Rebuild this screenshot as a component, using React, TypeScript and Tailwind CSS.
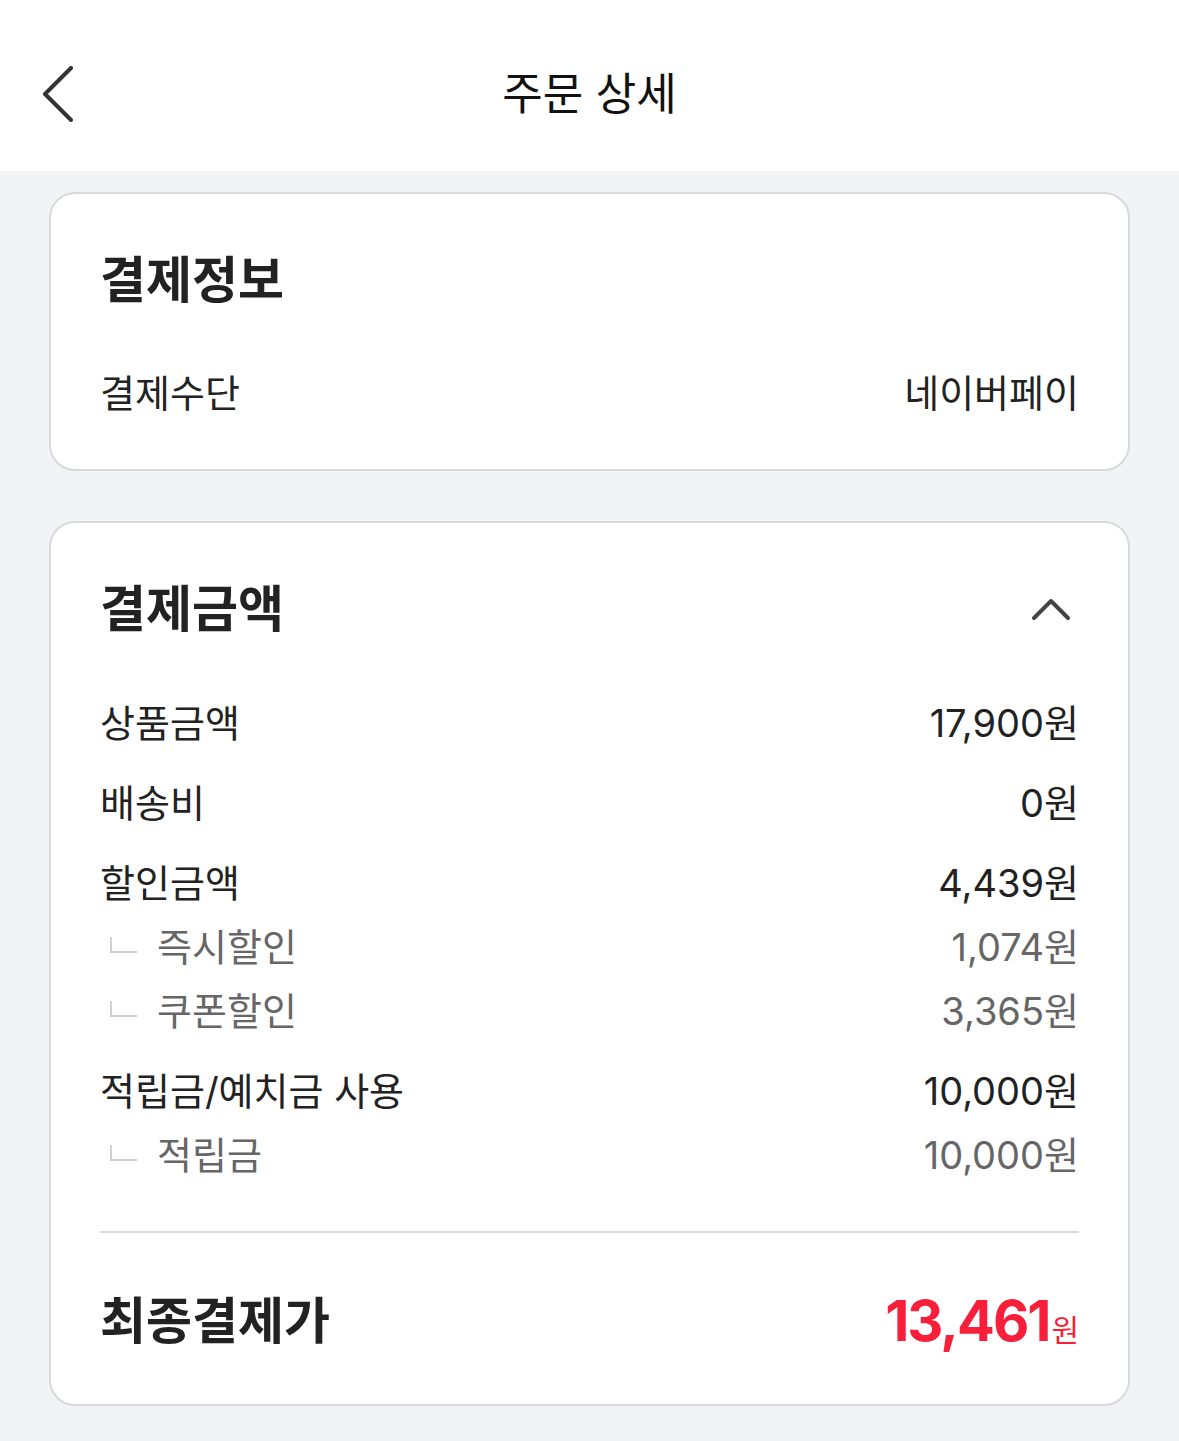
import React from "react";

const font = { fontFamily: 'Inter, "Noto Sans CJK KR", "Noto Sans", sans-serif' };

interface Row {
  label: string;
  value: string;
  sub?: boolean;
}

const groups: Row[][] = [
  [{ label: "상품금액", value: "17,900원" }],
  [{ label: "배송비", value: "0원" }],
  [
    { label: "할인금액", value: "4,439원" },
    { label: "즉시할인", value: "1,074원", sub: true },
    { label: "쿠폰할인", value: "3,365원", sub: true },
  ],
  [
    { label: "적립금/예치금 사용", value: "10,000원" },
    { label: "적립금", value: "10,000원", sub: true },
  ],
];

const PriceRow: React.FC<{ row: Row }> = ({ row }) => (
  <div className="flex items-center justify-between h-[64px]">
    {row.sub ? (
      <div className="flex items-center">
        <div className="w-[27px] h-[16px] ml-[10px] mr-[20px] border-l-2 border-b-2 border-[#d0d0d0] -mt-[4px]" />
        <span className="text-[38px] text-[#666666]">{row.label}</span>
      </div>
    ) : (
      <span className="text-[38px] text-[#222222]">{row.label}</span>
    )}
    <span className={`text-[38px] ${row.sub ? "text-[#666666]" : "text-[#222222]"}`}>{row.value}</span>
  </div>
);

const App: React.FC = () => {
  return (
    <div className="min-h-[1441px] bg-[#f2f3f5]" style={font}>
      {/* header */}
      <div className="relative h-[171px] bg-white flex items-center justify-center">
        <button className="absolute left-[40px] top-[66px]">
          <svg width="36" height="56" viewBox="0 0 36 56" fill="none">
            <path d="M31 2 L5 28 L31 54" stroke="#333333" strokeWidth="4" strokeLinecap="round" strokeLinejoin="round" />
          </svg>
        </button>
        <h1 className="text-[44px] text-[#111111] leading-[56px] mt-[16px]">주문 상세</h1>
      </div>

      <div className="px-[49px] pt-[21px] pb-[34px] flex flex-col gap-[50px]">
        {/* 결제정보 */}
        <div className="bg-white border-2 border-[#d9d9dd] rounded-[26px] px-[49px] pt-[58px] pb-[52px]">
          <h2 className="text-[50px] font-bold text-[#222222] leading-[56px]">결제정보</h2>
          <div className="flex items-center justify-between mt-[61px] h-[48px]">
            <span className="text-[38px] text-[#222222]">결제수단</span>
            <span className="text-[38px] text-[#222222]">네이버페이</span>
          </div>
        </div>

        {/* 결제금액 */}
        <div className="bg-white border-2 border-[#d9d9dd] rounded-[26px] px-[49px] pt-[58px] pb-[51px]">
          <div className="flex items-center justify-between h-[56px]">
            <h2 className="text-[50px] font-bold text-[#222222]">결제금액</h2>
            <svg width="40" height="26" viewBox="0 0 40 26" fill="none" className="mr-[8px]">
              <path d="M3 22 L20 5 L37 22" stroke="#444444" strokeWidth="4" strokeLinecap="round" strokeLinejoin="round" />
            </svg>
          </div>

          <div className="flex flex-col gap-[16px] mt-[54px]">
            {groups.map((g, i) => (
              <div key={i}>
                {g.map((row) => (
                  <PriceRow key={row.label} row={row} />
                ))}
              </div>
            ))}
          </div>

          <div className="h-[2px] bg-[#d9d9dd] mt-[44px]" />

          <div className="flex items-center justify-between h-[64px] mt-[56px]">
            <span className="text-[50px] font-bold text-[#222222]">최종결제가</span>
            <span className="flex items-baseline text-[#f81f3b]">
              <span className="text-[56px] font-bold tracking-[-2px]">13,461</span>
              <span className="text-[30px] ml-[2px]">원</span>
            </span>
          </div>
        </div>
      </div>
    </div>
  );
};

export default App;
